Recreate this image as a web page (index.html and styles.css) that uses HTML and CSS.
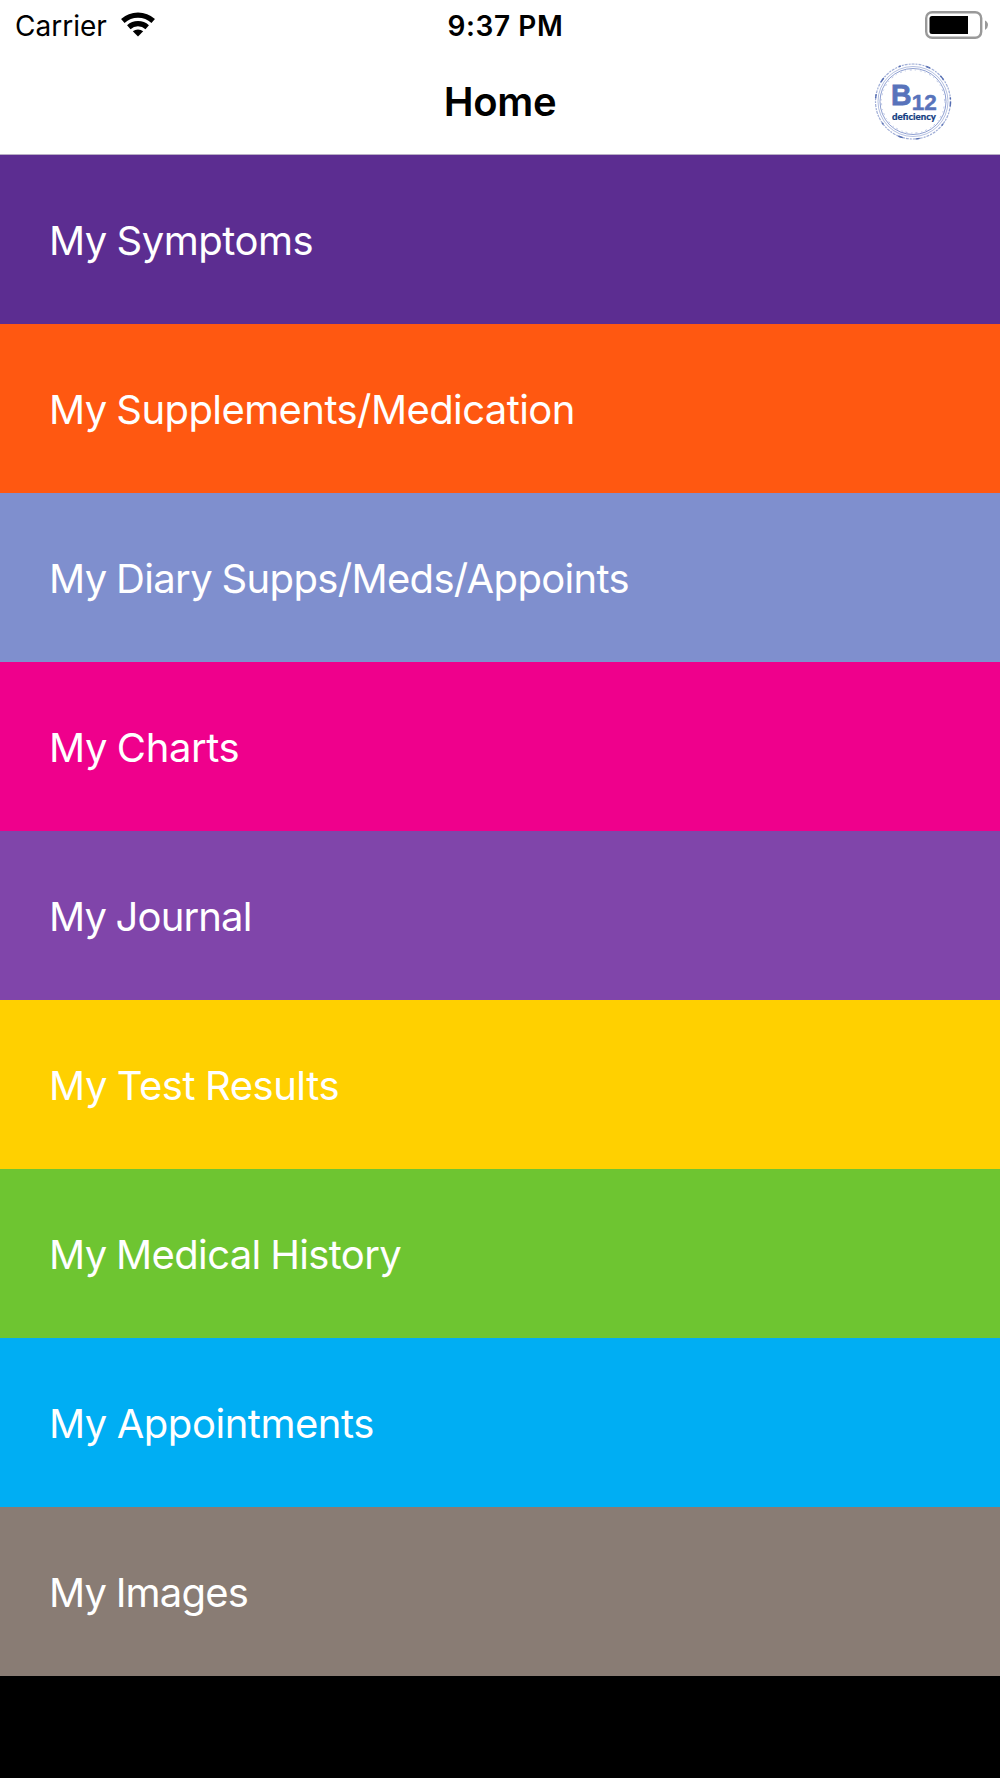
FILE: index.html
```html
<!DOCTYPE html>
<html lang="en">
<head>
<meta charset="utf-8">
<title>Home</title>
<link rel="stylesheet" href="styles.css">
</head>
<body>
<header class="top">
  <div class="status">
    <div class="carrier">
      <span class="carrier-name">Carrier</span>
      <svg class="wifi" width="34" height="25" viewBox="0 0 34 25">
        <path d="M17 24.500l5.200-5.200a8 8 0 0 0-10.400 0z"/>
        <path class="wave" d="M1.800 9a22.500 22.500 0 0 1 30.400 0M7.800 15.200a13.800 13.800 0 0 1 18.400 0"/>
      </svg>
    </div>
    <span class="time">9:37 PM</span>
    <svg class="battery" width="63" height="28" viewBox="0 0 63 28">
      <rect class="shell" x="1.200" y="1.200" width="55" height="25.600" rx="6"/>
      <path d="M7 5H43V23H7Q4.500 23 4.500 20.500V7.500Q4.500 5 7 5z"/>
      <path class="cap" d="M60 9.500q3 1.500 3 4.500t-3 5z"/>
    </svg>
  </div>
  <div class="nav">
    <h1 class="title">Home</h1>
    <svg class="logo" width="80" height="80" viewBox="0 0 80 80">
      <circle class="ring outer" cx="40" cy="39.500" r="37.500"/>
      <circle class="ring dashes" cx="40" cy="39.500" r="37.500"/>
      <circle class="ring middle" cx="40" cy="39.500" r="35"/>
      <circle class="ring inner" cx="40" cy="39.500" r="33"/>
      <circle class="ring specks" cx="40" cy="39.500" r="31.500"/>
      <text class="letter" x="18" y="43" textLength="20.500" lengthAdjust="spacingAndGlyphs">B</text>
      <text class="number" x="38.800" y="48" textLength="25" lengthAdjust="spacingAndGlyphs">12</text>
      <text class="word" x="19" y="57.500" textLength="44" lengthAdjust="spacingAndGlyphs">deficiency</text>
    </svg>
  </div>
</header>
<main class="menu">
  <a class="row symptoms">My Symptoms</a>
  <a class="row supplements">My Supplements/Medication</a>
  <a class="row diary">My Diary Supps/Meds/Appoints</a>
  <a class="row charts">My Charts</a>
  <a class="row journal">My Journal</a>
  <a class="row tests">My Test Results</a>
  <a class="row history">My Medical History</a>
  <a class="row appointments">My Appointments</a>
  <a class="row images">My Images</a>
</main>
</body>
</html>
```
FILE: styles.css
```css
* { box-sizing: border-box; }
body { margin: 0; width: 1000px; height: 1778px; overflow: hidden; background: #000; font-family: Inter, sans-serif; }
.top { height: 155px; background: #fff; border-bottom: 1px solid #b9aec6; }
.status { height: 51px; display: grid; grid-template-columns: 1fr auto 1fr; align-items: center; padding: 0 12px 0 15px; font-size: 28px; }
.carrier { display: flex; gap: 14px; align-items: center; }
.wifi { margin-bottom: 3px; }
.wave { fill: none; stroke: #000; stroke-width: 5.2; }
.battery { justify-self: end; margin-bottom: 2px; }
.shell { fill: none; stroke: #999; stroke-width: 2.4; }
.cap { fill: #999; }
.time { font-weight: 600; letter-spacing: .6px; padding-left: 8px; }
.nav { height: 101px; display: grid; grid-template-columns: 1fr auto 1fr; align-items: center; padding: 0 47px; }
.title { grid-column: 2; margin: 0; font-size: 40px; font-weight: 600; letter-spacing: -.3px; }
.logo { justify-self: end; }
.ring { fill: none; stroke: #6078bd; }
.outer { stroke-width: 1.2; stroke-dasharray: 3 1 2 1; opacity: .6; }
.dashes { stroke: #405ba8; stroke-width: 1.5; stroke-dasharray: 5 19 2 26 4 13; opacity: .8; }
.middle { stroke-width: .8; opacity: .6; }
.inner { stroke-width: 1; opacity: .7; }
.specks { stroke-width: 1; stroke-dasharray: 1 4 2 3; opacity: .4; }
.letter, .number { font-family: "Liberation Sans", sans-serif; font-weight: 700; fill: #5873bb; stroke: #5873bb; stroke-width: .8; }
.letter { font-size: 30px; }
.number { font-size: 22px; stroke-width: .5; }
.word { font-family: Lato, sans-serif; font-size: 10px; font-weight: 900; fill: #143d82; stroke: #143d82; stroke-width: .2; }
.menu { height: 1521px; display: grid; grid-template-rows: repeat(9, 1fr); }
.row { display: flex; align-items: center; padding: 0 0 0 49px; color: #fff; font-size: 40px; letter-spacing: -.62px; word-spacing: -1px; }
.symptoms { background: #5c2d91; letter-spacing: -.5px; }
.supplements { background: #ff5811; letter-spacing: -.58px; }
.diary { background: #7f8fce; letter-spacing: -.66px; }
.charts { background: #ef008c; letter-spacing: -.4px; }
.journal { background: #8045aa; letter-spacing: -.85px; }
.tests { background: #ffd000; letter-spacing: -.45px; }
.history { background: #6ec531; letter-spacing: -.65px; }
.appointments { background: #00aef3; letter-spacing: -.46px; }
.images { background: #897c74; letter-spacing: -.8px; }
.row { padding-top: 1px; }
```
